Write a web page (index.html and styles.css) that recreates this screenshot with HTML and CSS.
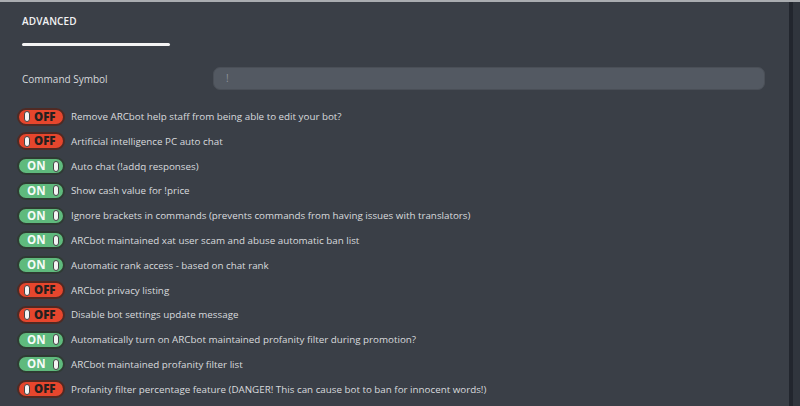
FILE: index.html
```html
<!DOCTYPE html>
<html>
<head>
<meta charset="utf-8">
<link rel="stylesheet" href="styles.css">
</head>
<body>
<div class="page">
  <div class="panel">
    <div class="tabs">
      <div class="tab">ADVANCED</div>
      <div class="tab-bar"></div>
    </div>
    <div class="field">
      <div class="field-label">Command Symbol</div>
      <div class="input">!</div>
    </div>
    <div class="list">
      <div class="row"><span class="tg off"><i class="knob"></i><b>OFF</b></span><span class="lbl">Remove ARCbot help staff from being able to edit your bot?</span></div>
      <div class="row"><span class="tg off"><i class="knob"></i><b>OFF</b></span><span class="lbl">Artificial intelligence PC auto chat</span></div>
      <div class="row"><span class="tg on"><b>ON</b><i class="knob"></i></span><span class="lbl">Auto chat (!addq responses)</span></div>
      <div class="row"><span class="tg on"><b>ON</b><i class="knob"></i></span><span class="lbl">Show cash value for !price</span></div>
      <div class="row"><span class="tg on"><b>ON</b><i class="knob"></i></span><span class="lbl">Ignore brackets in commands (prevents commands from having issues with translators)</span></div>
      <div class="row"><span class="tg on"><b>ON</b><i class="knob"></i></span><span class="lbl">ARCbot maintained xat user scam and abuse automatic ban list</span></div>
      <div class="row"><span class="tg on"><b>ON</b><i class="knob"></i></span><span class="lbl">Automatic rank access - based on chat rank</span></div>
      <div class="row"><span class="tg off"><i class="knob"></i><b>OFF</b></span><span class="lbl">ARCbot privacy listing</span></div>
      <div class="row"><span class="tg off"><i class="knob"></i><b>OFF</b></span><span class="lbl">Disable bot settings update message</span></div>
      <div class="row"><span class="tg on"><b>ON</b><i class="knob"></i></span><span class="lbl">Automatically turn on ARCbot maintained profanity filter during promotion?</span></div>
      <div class="row"><span class="tg on"><b>ON</b><i class="knob"></i></span><span class="lbl">ARCbot maintained profanity filter list</span></div>
      <div class="row"><span class="tg off"><i class="knob"></i><b>OFF</b></span><span class="lbl">Profanity filter percentage feature (DANGER! This can cause bot to ban for innocent words!)</span></div>
    </div>
  </div>
  <div class="edge"></div>
  <div class="edge2"></div>
</div>
</body>
</html>
```
FILE: styles.css
```css
* { box-sizing: border-box; }
html, body { margin: 0; padding: 0; }
body {
  width: 800px;
  height: 406px;
  overflow: hidden;
  background: #3a3f47;
  font-family: "Open Sans", "Liberation Sans", sans-serif;
}
.page {
  display: flex;
  height: 406px;
  border-top: 2px solid #a9acb0;
}
.panel {
  flex: 1;
  padding: 0 0 0 17px;
}
.tabs {
  padding: 12px 0 0 5px;
}
.tab {
  color: #f2f3f4;
  font-size: 10px;
  font-weight: 600;
  line-height: 14px;
  letter-spacing: 0.1px;
}
.tab-bar {
  margin-top: 15px;
  width: 148px;
  height: 3px;
  border-radius: 2px;
  background: #f4f4f4;
}
.field {
  display: flex;
  align-items: center;
  margin-top: 21px;
  padding-left: 5px;
}
.field-label {
  width: 191px;
  color: #d7d9dc;
  font-size: 10px;
}
.input {
  width: 552px;
  height: 23px;
  border-radius: 7px;
  background: #535962;
  border: 1px solid #4a4f57;
  color: #8e939a;
  font-size: 10px;
  line-height: 21px;
  padding-left: 12px;
}
.list {
  margin-top: 18px;
  display: flex;
  flex-direction: column;
  gap: 7.8px;
}
.row {
  display: flex;
  align-items: center;
  height: 17px;
}
.tg {
  width: 48px;
  height: 18px;
  border-radius: 9px;
  border: 2px solid #3b2a26;
  display: flex;
  align-items: center;
  flex: none;
  padding: 0 4px 0 5px;
}
.tg b {
  font-size: 11.5px;
  font-weight: 800;
  line-height: 14px;
}
.tg.off {
  background: #e6462d;
  border-color: #4f2a24;
}
.tg.off b {
  color: #23201f;
  margin-left: 4px;
}
.tg.on {
  background: #5fba7d;
  border-color: #2f3b33;
  justify-content: space-between;
  padding-left: 8px;
}
.tg.on b { color: #f6fbf7; font-weight: 700; }
.knob {
  width: 6px;
  height: 11px;
  border-radius: 3px;
  background: #f4f4f4;
  border: 1px solid #444;
}
.lbl {
  margin-left: 6px;
  color: #d9dbde;
  font-size: 9.8px;
  white-space: nowrap;
}
.edge {
  width: 4px;
  background: #22262e;
  margin-left: 0;
}
.edge2 {
  width: 7px;
  background: #30353d;
}
```
